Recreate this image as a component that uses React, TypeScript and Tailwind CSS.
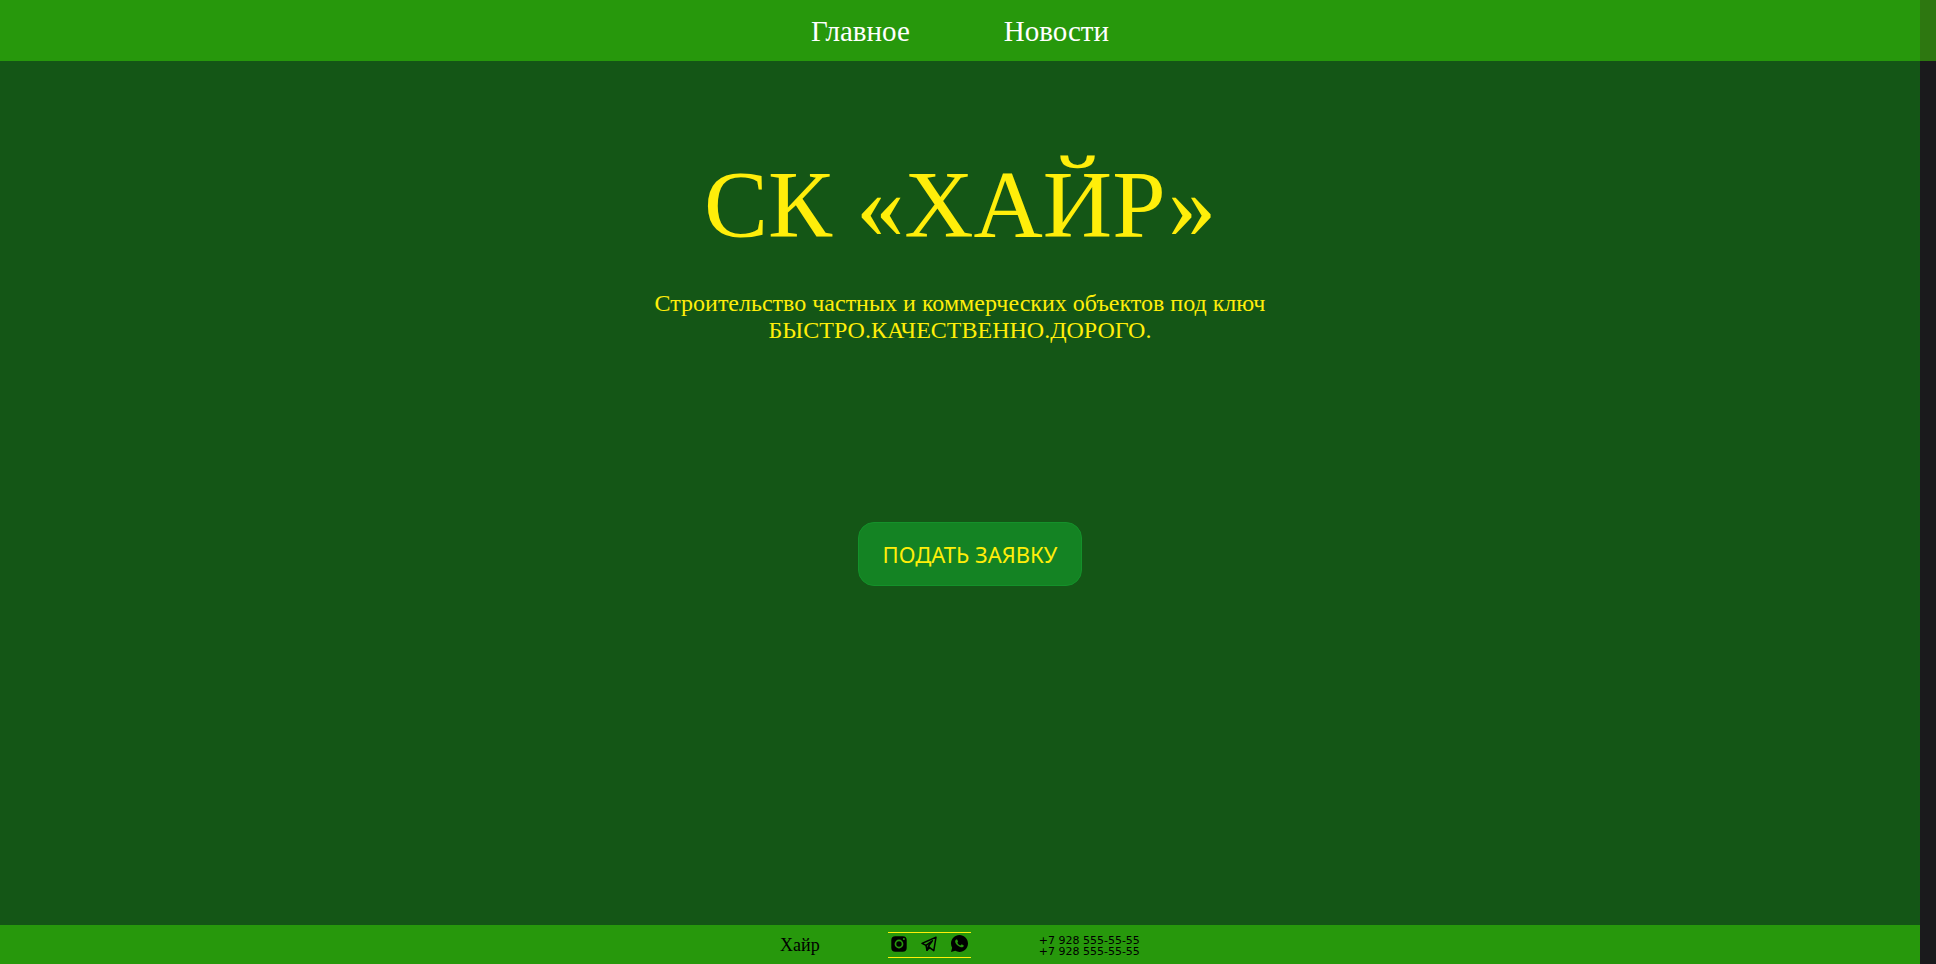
import { RiWhatsappFill } from "react-icons/ri";

function InstagramIcon() {
  return (
    <svg viewBox="0 0 16 16" className="h-4 w-4" fill="currentColor">
      <path
        fillRule="evenodd"
        d="M4.3 0.3h7.4a4 4 0 0 1 4 4v7.4a4 4 0 0 1-4 4H4.3a4 4 0 0 1-4-4V4.3a4 4 0 0 1 4-4ZM8 3.6a4.4 4.4 0 1 0 0 8.8a4.4 4.4 0 0 0 0-8.8ZM8 5.3a2.7 2.7 0 1 1 0 5.4a2.7 2.7 0 0 1 0-5.4ZM12.9 2.1a1 1 0 1 0 0 2a1 1 0 0 0 0-2Z"
      />
    </svg>
  );
}

function TelegramIcon() {
  return (
    <svg viewBox="0 0 16 16" className="h-4 w-4" fill="none" stroke="currentColor" strokeWidth="1.5" strokeLinejoin="round" strokeLinecap="round">
      <path d="M15 1.2 1 7.4 5 9.4 6 14.3 8.6 11.6 12.8 14.6 15 1.2Z" />
      <path d="M11.4 4.9 5 9.4M11.4 4.9 7.4 10.2 8.6 11.6M7.4 10.2 6 14.3" />
    </svg>
  );
}

const phones = ["+7 928 555-55-55", "+7 928 555-55-55"];

export default function App() {
  return (
    <div className="flex min-h-screen flex-col font-['Liberation_Serif',serif]">
      <header className="flex h-[61px]">
        <nav className="flex flex-1 items-center justify-center gap-[94px] bg-[#27980c] text-[29px] leading-9 text-white">
          <a href="#main">Главное</a>
          <a href="#news">Новости</a>
        </nav>
        <div className="w-4 bg-[#2d7710]" />
      </header>
      <div className="flex flex-1 bg-[#1a1a1c]">
        <div className="flex flex-1 flex-col bg-[#145616]">
          <main id="main" className="flex flex-1 flex-col items-center pt-24 text-center text-[#ffee0a]">
            <h1 className="text-8xl">СК «ХАЙР»</h1>
            <p className="mt-[37px] text-2xl leading-[27px]">
              Строительство частных и коммерческих объектов под ключ
              <br />
              БЫСТРО.КАЧЕСТВЕННО.ДОРОГО.
            </p>
            <button
              type="button"
              className="mt-[178px] ml-5 h-16 rounded-2xl border border-[#14912a] bg-[#148323] px-6 font-['Noto_Sans',sans-serif] text-[22px] leading-7"
            >
              ПОДАТЬ ЗАЯВКУ
            </button>
          </main>
          <footer className="flex h-[39px] items-center justify-center gap-[68px] bg-[#27980c] text-black">
            <span className="text-lg">Хайр</span>
            <div className="flex h-[26px] w-[83px] items-center justify-between border-y border-[#ffee0a] px-[3px] pb-[2px]">
              <a href="#instagram" aria-label="Instagram">
                <InstagramIcon />
              </a>
              <a href="#telegram" aria-label="Telegram">
                <TelegramIcon />
              </a>
              <a href="#whatsapp" aria-label="WhatsApp">
                <RiWhatsappFill viewBox="2 2 20 20" className="h-[17px] w-[17px]" />
              </a>
            </div>
            <div className="flex flex-col pt-[2px] font-['DejaVu_Sans',sans-serif] text-[11px] leading-[11px]">
              {phones.map((phone, i) => (
                <a key={i} href="tel:+79285555555">
                  {phone}
                </a>
              ))}
            </div>
          </footer>
        </div>
        <div className="w-4" />
      </div>
    </div>
  );
}
